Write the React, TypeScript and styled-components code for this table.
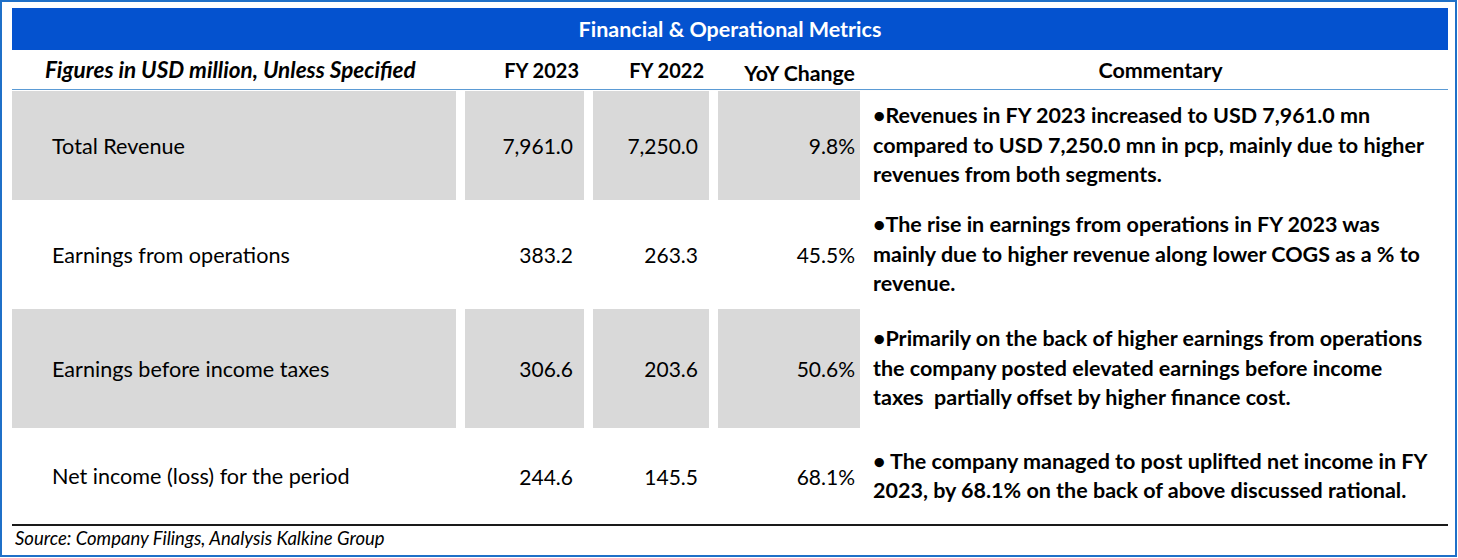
import React from 'react';
import styled, {createGlobalStyle} from 'styled-components';

const GlobalStyle = createGlobalStyle`
    html, body {
        margin: 0;
        padding: 0;
        background: #ffffff;
    }
    body {
        font-family: Lato, "Open Sans", sans-serif;
        color: #000000;
    }
`;

type Row = {
    label: string;
    fy23: string;
    fy22: string;
    yoy: string;
    shaded: boolean;
    height: number;
    lines: string[];
};

const rows: Row[] = [
    {
        label: 'Total Revenue',
        fy23: '7,961.0',
        fy22: '7,250.0',
        yoy: '9.8%',
        shaded: true,
        height: 109,
        lines: [
            '•Revenues in FY 2023 increased to USD 7,961.0 mn',
            'compared to USD 7,250.0 mn in pcp, mainly due to higher',
            'revenues from both segments.',
        ],
    },
    {
        label: 'Earnings from operations',
        fy23: '383.2',
        fy22: '263.3',
        yoy: '45.5%',
        shaded: false,
        height: 109,
        lines: [
            '•The rise in earnings from operations in FY 2023 was',
            'mainly due to higher revenue along lower COGS as a % to',
            'revenue.',
        ],
    },
    {
        label: 'Earnings before income taxes',
        fy23: '306.6',
        fy22: '203.6',
        yoy: '50.6%',
        shaded: true,
        height: 119,
        lines: [
            '•Primarily on the back of higher earnings from operations',
            'the company posted elevated earnings before income',
            'taxes  partially offset by higher finance cost.',
        ],
    },
    {
        label: 'Net income (loss) for the period',
        fy23: '244.6',
        fy22: '145.5',
        yoy: '68.1%',
        shaded: false,
        height: 96,
        lines: [
            '• The company managed to post uplifted net income in FY',
            '2023, by 68.1% on the back of above discussed rational.',
        ],
    },
];

export default function App() {
    return (
        <>
            <GlobalStyle/>
            <Frame>
                <Sheet>
                    <TitleBar>Financial &amp; Operational Metrics</TitleBar>
                    <HeaderRow>
                        <HeadNote>Figures in USD million, Unless Specified</HeadNote>
                        <HeadCell>FY 2023</HeadCell>
                        <HeadCell>FY 2022</HeadCell>
                        <HeadCell low>YoY Change</HeadCell>
                        <HeadCommentary>Commentary</HeadCommentary>
                    </HeaderRow>
                    <Body>
                        {rows.map(r => (
                            <DataRow key={r.label} rowHeight={r.height}>
                                <LabelCell shaded={r.shaded}>{r.label}</LabelCell>
                                <NumCell shaded={r.shaded}>{r.fy23}</NumCell>
                                <NumCell shaded={r.shaded}>{r.fy22}</NumCell>
                                <NumCell shaded={r.shaded} tight>{r.yoy}</NumCell>
                                <Commentary>
                                    {r.lines.map(l => <Line key={l}>{l}</Line>)}
                                </Commentary>
                            </DataRow>
                        ))}
                    </Body>
                    <Source>Source: Company Filings, Analysis Kalkine Group</Source>
                </Sheet>
            </Frame>
        </>
    );
}

const Frame = styled.div({
    boxSizing: 'border-box',
    width: 1457,
    height: 557,
    border: '2px solid #1f70c8',
    padding: '6px 0 0 10px',
})

const Sheet = styled.div({
    width: 1436,
    display: 'flex',
    flexDirection: 'column',
})

const TitleBar = styled.div({
    height: 42,
    background: '#0452cf',
    color: '#ffffff',
    fontWeight: 700,
    fontSize: 21.5,
    display: 'flex',
    alignItems: 'center',
    justifyContent: 'center',
})

const grid = {
    display: 'grid',
    gridTemplateColumns: '444px 119px 116px 142px 1fr',
    columnGap: 9,
}

const HeaderRow = styled.div({
    ...grid,
    height: 39,
    borderBottom: '1px solid #5b9bd5',
    marginBottom: 1,
    fontWeight: 700,
    fontSize: 20,
})

const HeadNote = styled.div({
    fontStyle: 'italic',
    fontSize: 22.5,
    paddingLeft: 33,
    alignSelf: 'center',
    whiteSpace: 'nowrap',
})

const HeadCell = styled.div<{low?: boolean}>(p => ({
    textAlign: 'right',
    paddingRight: 5,
    fontSize: p.low ? 21.3 : 20,
    alignSelf: p.low ? 'end' : 'center',
    paddingBottom: p.low ? 3 : 0,
    whiteSpace: 'nowrap',
}))

const HeadCommentary = styled.div({
    fontSize: 21.5,
    textAlign: 'center',
    alignSelf: 'center',
    paddingLeft: 4,
})

const Body = styled.div({
    display: 'flex',
    flexDirection: 'column',
    borderBottom: '2px solid #1a1a1a',
})

const DataRow = styled.div<{rowHeight: number}>(p => ({
    ...grid,
    height: p.rowHeight,
    fontSize: 21,
}))

const LabelCell = styled.div<{shaded: boolean}>(p => ({
    background: p.shaded ? '#d9d9d9' : 'transparent',
    display: 'flex',
    alignItems: 'center',
    paddingLeft: 40,
    fontSize: 21.6,
}))

const NumCell = styled.div<{shaded: boolean; tight?: boolean}>(p => ({
    background: p.shaded ? '#d9d9d9' : 'transparent',
    display: 'flex',
    alignItems: 'center',
    justifyContent: 'flex-end',
    paddingRight: p.tight ? 5 : 11,
}))

const Commentary = styled.div({
    display: 'flex',
    flexDirection: 'column',
    justifyContent: 'center',
    paddingLeft: 4,
    fontWeight: 700,
    fontSize: 21.5,
    lineHeight: '29.5px',
})

const Line = styled.div({
    whiteSpace: 'pre',
})

const Source = styled.div({
    fontStyle: 'italic',
    fontSize: 18.5,
    paddingLeft: 3,
    paddingTop: 1,
})
